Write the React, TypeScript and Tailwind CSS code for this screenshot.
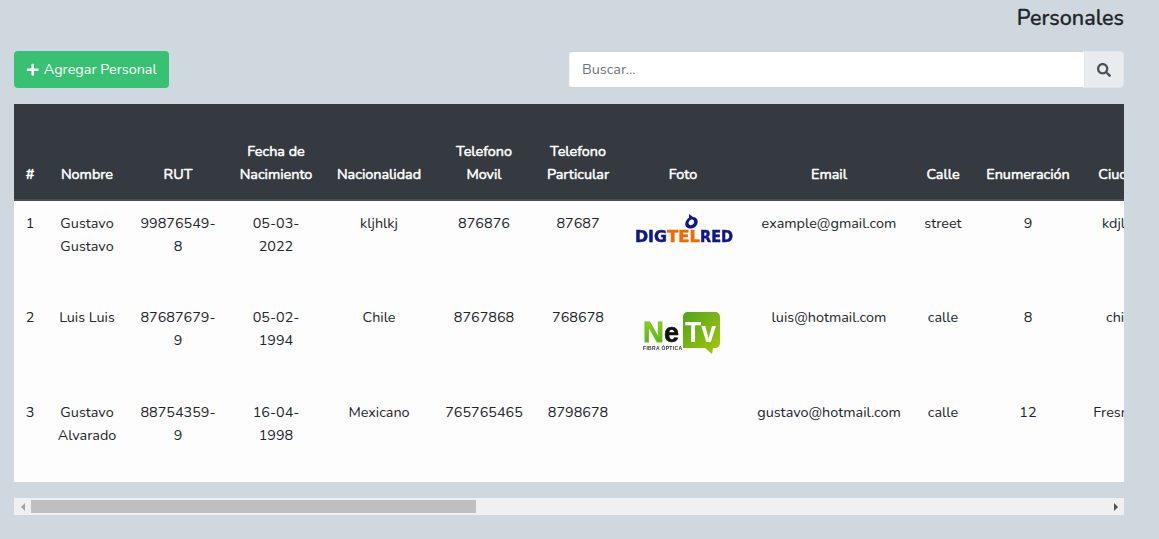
import { FaPlus, FaSearch } from 'react-icons/fa';

const columns = [
  { label: ['#'], width: 'w-[32px]' },
  { label: ['Nombre'], width: 'w-[82px]' },
  { label: ['RUT'], width: 'w-[100px]' },
  { label: ['Fecha de', 'Nacimiento'], width: 'w-[96px]' },
  { label: ['Nacionalidad'], width: 'w-[110px]' },
  { label: ['Telefono', 'Movil'], width: 'w-[100px]' },
  { label: ['Telefono', 'Particular'], width: 'w-[88px]' },
  { label: ['Foto'], width: 'w-[122px]' },
  { label: ['Email'], width: 'w-[170px]' },
  { label: ['Calle'], width: 'w-[58px]' },
  { label: ['Enumeración'], width: 'w-[112px]' },
  { label: ['Ciudad'], width: 'w-[74px]' },
];

const rows = [
  {
    id: 1,
    height: 'h-[95px]',
    nombre: ['Gustavo', 'Gustavo'],
    rut: ['99876549-', '8'],
    fecha: ['05-03-', '2022'],
    nacionalidad: 'kljhlkj',
    movil: '876876',
    particular: '87687',
    foto: <DigitelLogo />,
    email: 'example@gmail.com',
    calle: 'street',
    numero: '9',
    ciudad: 'kdjlkjl',
  },
  {
    id: 2,
    height: 'h-[95px]',
    nombre: ['Luis Luis'],
    rut: ['87687679-', '9'],
    fecha: ['05-02-', '1994'],
    nacionalidad: 'Chile',
    movil: '8767868',
    particular: '768678',
    foto: <NetvLogo />,
    email: 'luis@hotmail.com',
    calle: 'calle',
    numero: '8',
    ciudad: 'chile',
  },
  {
    id: 3,
    height: 'h-[92px]',
    nombre: ['Gustavo', 'Alvarado'],
    rut: ['88754359-', '9'],
    fecha: ['16-04-', '1998'],
    nacionalidad: 'Mexicano',
    movil: '765765465',
    particular: '8798678',
    foto: null,
    email: 'gustavo@hotmail.com',
    calle: 'calle',
    numero: '12',
    ciudad: 'Fresnillo',
  },
];

function DigitelLogo() {
  return (
    <svg width="100" height="34" viewBox="0 0 100 34" className="mx-auto mt-px blur-[0.4px]">
      <path
        d="M56 1l4 3c3.500 0 5.500 3 4.500 6.500-1 3.500-4.500 5.500-8 5-3-.5-5-3-4-6 .7-2.200 2-3.800 3.500-4.800zm2.500 5.500c-1.800.5-3 2.200-3 3.600 0 1.400 1.400 2.400 3 2 1.800-.5 3-2.200 2.600-3.800-.3-1.300-1.400-2-2.600-1.800z"
        fill="#10188c"
      />
      <text x="2" y="29" fontFamily="DejaVu Sans, sans-serif" fontWeight="700" fontSize="15" textLength="32" lengthAdjust="spacingAndGlyphs" fill="#10188c" stroke="#10188c" strokeWidth="0.5">
        DIG
      </text>
      <text x="34" y="29" fontFamily="DejaVu Sans, sans-serif" fontWeight="700" fontSize="15" textLength="33" lengthAdjust="spacingAndGlyphs" fill="#ef6c00" stroke="#ef6c00" strokeWidth="0.5">
        TEL
      </text>
      <text x="67" y="29" fontFamily="DejaVu Sans, sans-serif" fontWeight="700" fontSize="15" textLength="33" lengthAdjust="spacingAndGlyphs" fill="#10188c" stroke="#10188c" strokeWidth="0.5">
        RED
      </text>
    </svg>
  );
}

function NetvLogo() {
  return (
    <svg width="82" height="50" viewBox="0 0 82 50" className="mx-auto mt-px blur-[0.4px]">
      <defs>
        <linearGradient id="bubble" x1="0" y1="0" x2="1" y2="1">
          <stop offset="0" stopColor="#4fa31e" />
          <stop offset="1" stopColor="#a8c80a" />
        </linearGradient>
        <linearGradient id="letter" x1="0" y1="0" x2="0" y2="1">
          <stop offset="0" stopColor="#a6d30e" />
          <stop offset="1" stopColor="#3fae2a" />
        </linearGradient>
      </defs>
      <path
        d="M41 10c0-3 2-5 5-5h27c3 0 5 2 5 5v26c0 3-2 5-5 5h-2l-1 6-7-6H41z"
        fill="url(#bubble)"
      />
      <text x="1" y="35" fontFamily="Liberation Sans, sans-serif" fontWeight="700" fontSize="29" fill="url(#letter)" stroke="#6fc01c" strokeWidth="0.8">
        N
      </text>
      <text x="22" y="35" fontFamily="Liberation Sans, sans-serif" fontWeight="700" fontSize="27" fill="#111" stroke="#111" strokeWidth="0.6">
        e
      </text>
      <text x="43" y="35" fontFamily="Liberation Sans, sans-serif" fontWeight="700" fontSize="29" textLength="31" lengthAdjust="spacingAndGlyphs" fill="#fff">
        Tv
      </text>
      <text x="1" y="43" fontFamily="Liberation Sans, sans-serif" fontWeight="700" fontSize="5" textLength="39" fill="#333">
        FIBRA ÓPTICA
      </text>
    </svg>
  );
}

function Lines({ lines }: { lines: string[] }) {
  return (
    <>
      {lines.map((line) => (
        <div key={line + lines.length}>{line}</div>
      ))}
    </>
  );
}

export default function App() {
  return (
    <div className="min-h-[539px] overflow-hidden bg-[#cfd8de] px-[14px] pt-[6px] font-['Nunito','Lato',sans-serif] text-[14.4px] leading-[23px] text-[#212529]">
      <div className="w-[1110px]">
        <h1 className="text-right text-[21.6px] leading-[24px] font-medium text-[#212529] [-webkit-text-stroke:0.3px_#212529]">Personales</h1>

        <div className="mt-[21px] flex items-center justify-between">
          <button className="flex h-[37px] w-[155px] items-center justify-center gap-[4px] rounded-[4px] bg-[#38c172] text-white">
            <FaPlus className="text-[13.5px]" />
            Agregar Personal
          </button>
          <div className="flex h-[37px] w-[555px]">
            <div className="flex flex-1 items-center rounded-l-[4px] border border-y-[#ced4da] border-r-white border-l-[#f2f4f6] bg-white pl-3 text-[#6c757d]">
              Buscar...
            </div>
            <div className="flex w-[40px] items-center justify-center rounded-r-[4px] border border-[#e2e6ea] bg-[#e9ecef] text-[#495057]">
              <FaSearch className="text-[14px]" />
            </div>
          </div>
        </div>

        <div className="mt-[16px] overflow-hidden">
          <table className="w-[1144px] table-fixed border-collapse">
            <colgroup>
              {columns.map((col) => (
                <col key={col.label[0]} className={col.width} />
              ))}
            </colgroup>
            <thead>
              <tr className="h-[96px] border-b-2 border-[#454d55] bg-[#343a40] text-white">
                {columns.map((col) => (
                  <th key={col.label[0]} className="px-0 pb-[13px] text-center align-bottom font-normal [-webkit-text-stroke:0.5px_white]">
                    <Lines lines={col.label} />
                  </th>
                ))}
              </tr>
            </thead>
            <tbody className="bg-[#fdfdfd]">
              {rows.map((row) => (
                <tr key={row.id} className={row.height + ' text-center'}>
                  <td className="pt-[11px] align-top">{row.id}</td>
                  <td className="pt-[11px] align-top"><Lines lines={row.nombre} /></td>
                  <td className="pt-[11px] align-top"><Lines lines={row.rut} /></td>
                  <td className="pt-[11px] align-top"><Lines lines={row.fecha} /></td>
                  <td className="pt-[11px] align-top">{row.nacionalidad}</td>
                  <td className="pt-[11px] align-top">{row.movil}</td>
                  <td className="pt-[11px] align-top">{row.particular}</td>
                  <td className="pt-[11px] align-top">{row.foto}</td>
                  <td className="pt-[11px] align-top">{row.email}</td>
                  <td className="pt-[11px] align-top">{row.calle}</td>
                  <td className="pt-[11px] align-top">{row.numero}</td>
                  <td className="pt-[11px] align-top">{row.ciudad}</td>
                </tr>
              ))}
            </tbody>
          </table>
        </div>

        <div className="mt-[16px] flex h-[17px] items-center bg-[#f0f0f0]">
          <div className="flex w-[17px] justify-center">
            <div className="h-0 w-0 border-y-4 border-r-4 border-y-transparent border-r-[#a3a3a3]" />
          </div>
          <div className="h-[13px] w-[445px] bg-[#bfbfbf]" />
          <div className="flex-1" />
          <div className="flex w-[17px] justify-center">
            <div className="h-0 w-0 border-y-4 border-l-4 border-y-transparent border-l-[#505050]" />
          </div>
        </div>
      </div>
    </div>
  );
}
